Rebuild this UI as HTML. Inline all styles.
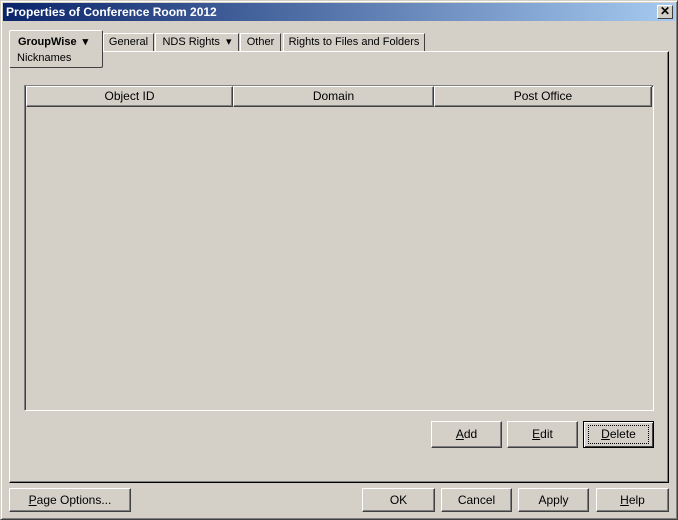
<!DOCTYPE html>
<html><head><style>
*{margin:0;padding:0;box-sizing:border-box}
body{width:678px;height:520px;background:#d4d0c8;font-family:"Liberation Sans",sans-serif;font-size:12px;color:#000;position:relative;overflow:hidden}
.a{position:absolute}
.win{left:0;top:0;width:678px;height:520px;border:1px solid;border-color:#d4d0c8 #404040 #404040 #d4d0c8;box-shadow:inset 1px 1px #fff,inset -1px -1px #808080}
.title{left:3px;top:3px;width:672px;height:18px;background:linear-gradient(90deg,#0a246a,#a6caf0);color:#fff;font-weight:bold;font-size:12px;line-height:18px;padding-left:3px}
.cls{left:657px;top:5px;width:16px;height:14px;background:#d4d0c8;border:1px solid;border-color:#fff #404040 #404040 #fff;font-size:12px;line-height:11px;text-align:center;font-weight:bold;color:#000}
.tab{border:1px solid;border-bottom:none;border-color:#fff #404040 #404040 #fff;height:18px;line-height:16px;text-align:center;font-size:11px}
.panel{left:9px;top:51px;width:660px;height:432px;border:1px solid;border-color:#fff #000 #000 #fff;box-shadow:inset -1px -1px #808080}
.btn{border:1px solid;border-color:#fff #404040 #404040 #fff;box-shadow:inset -1px -1px #808080;text-align:center;font-size:12px;background:#d4d0c8}
.hd{top:86px;height:21px;border:1px solid;border-color:#fff #404040 #404040 #fff;box-shadow:inset -1px -1px #808080;text-align:center;line-height:19px;font-size:12px}
u{text-decoration:underline}
</style></head><body>
<div class="a win"></div>
<div class="a title">Properties of Conference Room 2012</div>
<div class="a cls">✕</div>
<div class="a panel"></div>
<div class="a tab" style="left:103px;top:33px;width:51px">General</div>
<div class="a tab" style="left:155px;top:33px;width:84px">NDS Rights &nbsp;▾</div>
<div class="a tab" style="left:240px;top:33px;width:41px">Other</div>
<div class="a tab" style="left:283px;top:33px;width:142px">Rights to Files and Folders</div>
<div class="a" style="left:9px;top:30px;width:94px;height:38px;background:#d4d0c8;border:1px solid;border-color:#fff #404040 #404040 #fff;border-radius:2px">
<div style="position:absolute;left:8px;top:4px;font-weight:bold;font-size:11px">GroupWise &nbsp;▾</div>
<div style="position:absolute;left:7px;top:21px;font-size:11px">Nicknames</div></div>
<div class="a" style="left:24px;top:85px;width:630px;height:326px;border:1px solid;border-color:#808080 #fff #fff #808080;box-shadow:inset 1px 1px #404040"></div>
<div class="a hd" style="left:26px;width:207px">Object ID</div>
<div class="a hd" style="left:233px;width:201px">Domain</div>
<div class="a hd" style="left:434px;width:218px">Post Office</div>
<div class="a btn" style="left:431px;top:421px;width:71px;height:27px;line-height:25px"><u>A</u>dd</div>
<div class="a btn" style="left:507px;top:421px;width:71px;height:27px;line-height:25px"><u>E</u>dit</div>
<div class="a btn" style="left:583px;top:421px;width:71px;height:27px;line-height:25px;border-color:#000;box-shadow:inset 1px 1px #fff,inset -1px -1px #404040"><span style="display:inline-block;border:1px dotted #000;width:61px;height:19px;line-height:17px;margin-top:3px"><u>D</u>elete</span></div>
<div class="a btn" style="left:9px;top:488px;width:122px;height:24px;line-height:22px"><u>P</u>age Options...</div>
<div class="a btn" style="left:362px;top:488px;width:73px;height:24px;line-height:22px">OK</div>
<div class="a btn" style="left:441px;top:488px;width:71px;height:24px;line-height:22px">Cancel</div>
<div class="a btn" style="left:518px;top:488px;width:71px;height:24px;line-height:22px">Apply</div>
<div class="a btn" style="left:596px;top:488px;width:73px;height:24px;line-height:22px"><u>H</u>elp</div>
</body></html>
